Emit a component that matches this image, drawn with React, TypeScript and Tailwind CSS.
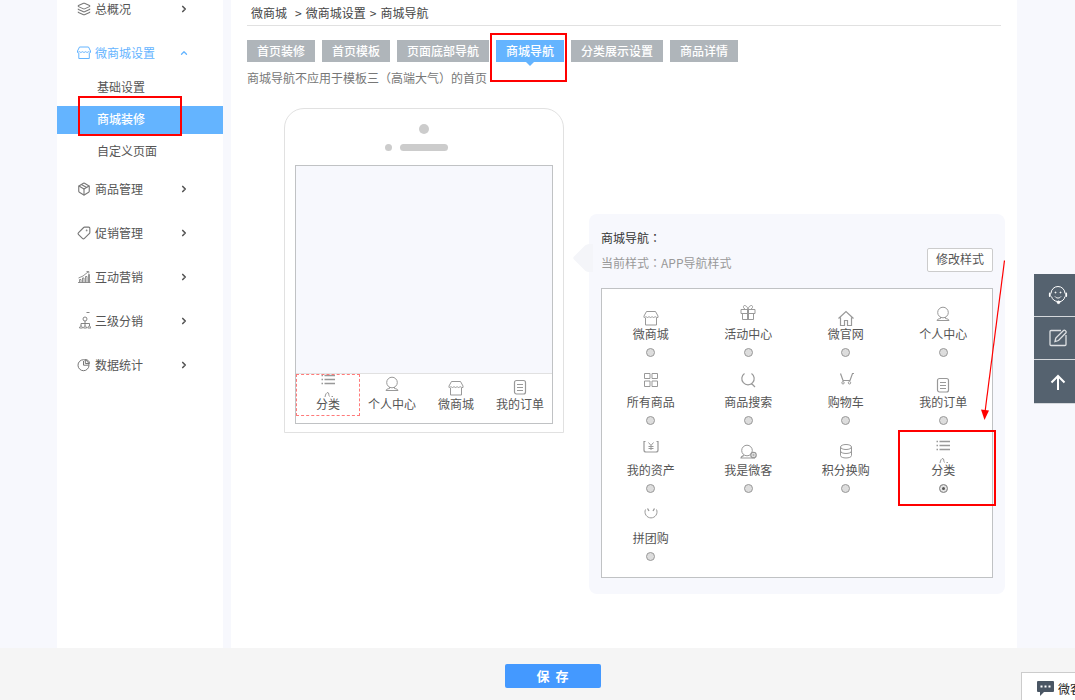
import { useState } from "react";
import type { ReactNode } from "react";
import { ChevronRight, ChevronUp, Layers, Package, Tag } from "lucide-react";

const navIcons: Record<string, ReactNode> = {
  store: (
    <>
      <path d="M7.5 7.5h9l2.5 4.5v1.5h-1.2c-.8 0-1-.8-1.6-.8s-.8.8-1.6.8-.9-.8-1.5-.8-.8.8-1.5.8-1-.8-1.6-.8-.8.8-1.5.8-.9-.8-1.5-.8-.8.8-1.4.8H5V12z" />
      <path d="M6.5 14v7h11v-7" />
    </>
  ),
  gift: (
    <>
      <path d="M5 5.5h14v4H5zM6.500 9.500v6h11v-6M11.500 5.500v10M12.500 5.500v10" />
      <path d="M12 5c-.5-2-2-3.500-3.500-3.500S7 4.500 9 5M12 5c.5-2 2-3.500 3.500-3.500S17 4.500 15 5" />
    </>
  ),
  home: <path d="M4.500 14.500 12 7.500l7.500 7M6.500 13.500v8h4v-5h3v5h4v-8" strokeWidth="1.200" />,
  person: (
    <>
      <circle cx="12" cy="8.500" r="5.300" />
      <path d="M9.500 13v1.500c-2 .3-3.500 1-3.500 2h12c0-1-1.500-1.700-3.500-2V13" />
    </>
  ),
  grid: <path d="M5.500 1.500h5.500v5H5.500zM13 1.500h5.500v5H13zM5.500 9h5.500v5.500H5.500zM13 9h5.500v5.500H13z" />,
  search: <path d="M8.500 1.500A6.200 6.200 0 1 0 15.500 1.500M15.500 11.500l3.500 3.500" strokeWidth="1.200" />,
  cart: (
    <>
      <path d="M6.500 1.500 9 8.500h7l2.500-7H20" strokeWidth="1.200" />
      <circle cx="9" cy="10.800" r="1.200" />
      <circle cx="15.500" cy="10.800" r="1.200" />
    </>
  ),
  order: (
    <>
      <rect x="6.500" y="6.500" width="11" height="13.500" rx="2" strokeWidth="1.200" />
      <path d="M9 10.500h6M9 13.500h6M9 16.500h6" />
    </>
  ),
  asset: (
    <>
      <path d="M6.500 1.500h-1.500v8.500a2 2 0 0 0 2 2h10a2 2 0 0 0 2-2V1.500h-1.500" strokeWidth="1.200" />
      <path d="m9.500 2.500 2.500 3 2.500-3M12 5.500V10M9.500 6.500h5M9.500 8.500h5" />
    </>
  ),
  agent: (
    <>
      <circle cx="11" cy="10.500" r="5.300" />
      <path d="M8 15.500c-1.500.5-3 1-3 2.500h14" strokeWidth="1.200" />
      <circle cx="17.500" cy="15" r="2.700" strokeWidth="1.300" />
      <circle cx="17.500" cy="15" r=".8" />
    </>
  ),
  coins: (
    <>
      <ellipse cx="12" cy="7" rx="5.500" ry="2.500" />
      <path d="M6.500 7v8.500c0 3.300 11 3.300 11 0V7M6.500 11c0 3.300 11 3.300 11 0" />
    </>
  ),
  list: (
    <>
      <path d="M8.500 1.500H19M8.500 5.500H19M8.500 9.500H19" strokeWidth="1.400" />
      <path d="M5.500 1.500H7M5.500 5.500H7M5.500 9.500H7" strokeWidth="1.600" />
      <path d="M9 23c.5-3 1.500-4.500 3-4.500 1 0 .5 3 1.500 4M15.500 22.500h1.500" />
    </>
  ),
  group: (
    <>
      <path d="M6.500 1.500a6 6 0 1 0 11 0" />
      <path d="m8.500.5 1.500 2.500M15.500.5 14 3" strokeWidth="1.300" />
    </>
  ),
};

const navOptions = [
  { icon: "store", name: "微商城" },
  { icon: "gift", name: "活动中心" },
  { icon: "home", name: "微官网" },
  { icon: "person", name: "个人中心" },
  { icon: "grid", name: "所有商品" },
  { icon: "search", name: "商品搜索" },
  { icon: "cart", name: "购物车" },
  { icon: "order", name: "我的订单" },
  { icon: "asset", name: "我的资产" },
  { icon: "agent", name: "我是微客" },
  { icon: "coins", name: "积分换购" },
  { icon: "list", name: "分类" },
  { icon: "group", name: "拼团购" },
];

const phoneNav = [
  { icon: "list", name: "分类" },
  { icon: "person", name: "个人中心" },
  { icon: "store", name: "微商城" },
  { icon: "order", name: "我的订单" },
];

const tabs = ["首页装修", "首页模板", "页面底部导航", "商城导航", "分类展示设置", "商品详情"];

// full-width punctuation centred in its em box
function Mark({ children }: { children: string }) {
  return <span className="font-['Noto_Sans_CJK_TC',sans-serif]">{children}</span>;
}

function NavIcon({ name }: { name: string }) {
  return (
    <svg
      viewBox="0 0 24 24"
      className="-mb-[3px] h-6 w-6 shrink-0 text-[#999]"
      fill="none"
      stroke="currentColor"
      aria-hidden="true"
    >
      {navIcons[name]}
    </svg>
  );
}

function SideIcon({ children }: { children: ReactNode }) {
  return (
    <svg viewBox="0 0 14 14" className="size-3.5" fill="none" stroke="currentColor" strokeWidth="1" aria-hidden="true">
      {children}
    </svg>
  );
}

function MenuRow({ icon, name, open }: { icon: ReactNode; name: string; open?: boolean }) {
  return (
    <button
      type="button"
      className={`flex h-11 w-full items-center gap-1 pr-[34px] pb-0.5 pl-5 ${open ? "text-[#64b4ff]" : "text-[#555]"}`}
    >
      <span className={open ? "" : "text-[#777]"}>{icon}</span>
      <span>{name}</span>
      {open ? (
        <ChevronUp className="ml-auto size-2.5" strokeWidth={3} />
      ) : (
        <ChevronRight className="ml-auto size-2.5" strokeWidth={4} />
      )}
    </button>
  );
}

function Sidebar() {
  return (
    <nav className="w-[166px] shrink-0 overflow-hidden bg-white">
      <div className="-mt-3">
        <MenuRow icon={<Layers className="size-3.5" strokeWidth={1.800} />} name="总概况" />
        <MenuRow
          open
          name="微商城设置"
          icon={
            <SideIcon>
              <path d="M2.500 1h9l2 4v1.500c-1 0-1.200-.8-1.800-.8s-.9.8-1.600.8-.9-.8-1.500-.8-.9.8-1.600.8-.9-.8-1.500-.8-.9.8-1.600.8-.9-.8-1.500-.8-.8.8-1.900.8V5zM1.800 7v5.500h10.500V7" />
            </SideIcon>
          }
        />
        <ul className="-mt-1">
          <li>
            <a href="#basic" className="flex h-8 items-center pb-0.5 pl-10">
              基础设置
            </a>
          </li>
          <li className="relative py-0.5">
            <a href="#decorate" className="flex h-7 items-center bg-[#64b4ff] pb-0.5 pl-10 font-medium text-white">
              商城装修
            </a>
            <span className="pointer-events-none absolute -top-2 left-[21px] h-10 w-[104px] border-2 border-[#f00]" />
          </li>
          <li>
            <a href="#pages" className="flex h-8 items-center pb-0.5 pl-10">
              自定义页面
            </a>
          </li>
        </ul>
        <MenuRow icon={<Package className="size-3.5" strokeWidth={1.900} />} name="商品管理" />
        <MenuRow icon={<Tag className="size-3.5 -scale-x-100" strokeWidth={1.900} />} name="促销管理" />
        <MenuRow
          name="互动营销"
          icon={
            <SideIcon>
              <path d="M1 12.500h12.500M2.500 12.500v-3H4v3M5.500 12.500V8H7v4.500M8.500 12.500v-6H10v6M11.500 12.500V4.500h1v8M1.500 8 6 6l5-4M9.500 1.500h2.300v2" strokeWidth=".8" />
            </SideIcon>
          }
        />
        <MenuRow
          name="三级分销"
          icon={
            <svg viewBox="0 0 14 18" className="h-[18px] w-3.5" fill="none" stroke="currentColor" strokeWidth=".9" aria-hidden="true">
              <path d="M9.500.5h3" />
              <circle cx="8" cy="7" r="2" />
              <path d="M8 9v5M4 14v-2.500h8.500V14M2.500 16c0-2.500 3-2.500 3 0zM6.600 16c0-2.500 3-2.500 3 0zM10.800 16c0-2.500 3-2.500 3 0z" />
            </svg>
          }
        />
        <MenuRow
          name="数据统计"
          icon={
            <SideIcon>
              <circle cx="6.500" cy="7.200" r="5.500" />
              <path d="M6.500 7.200V3M6.500 7.200h5.300M8.300 1.500v4h4.200c0-2.400-1.700-3.800-4.200-4z" />
            </SideIcon>
          }
        />
      </div>
    </nav>
  );
}

function Phone() {
  return (
    <div className="w-[280px] shrink-0 rounded-t-[20px] border border-[#e1e1e1] px-2.5 pt-[15px] pb-2">
      <div className="flex flex-col items-center gap-2.5">
        <span className="size-2.5 rounded-full bg-[#ccc]" />
        <span className="flex items-center gap-2 pr-4">
          <span className="size-[7px] rounded-full bg-[#ccc]" />
          <span className="h-[7px] w-12 rounded-full bg-[#ccc]" />
        </span>
      </div>
      <div className="mt-3.5 border border-[#c0c2c4]">
        <div className="h-[207px] bg-[#f7f8fd]" />
        <ul className="grid grid-cols-4 border-t border-[#e1e1e1] pb-[7px]">
          {phoneNav.map((item, i) => (
            <li
              key={item.name}
              className={`flex h-[42px] flex-col items-center ${i === 0 ? "outline outline-1 -outline-offset-1 outline-dashed outline-[#ff7a7a]" : ""}`}
            >
              <NavIcon name={item.icon} />
              <span className="leading-[18px]">{item.name}</span>
            </li>
          ))}
        </ul>
      </div>
    </div>
  );
}

function NavPanel() {
  const [selected, setSelected] = useState("分类");

  return (
    <section className="relative mt-[106px] flex-1 rounded-lg bg-[#f7f8fd] px-3 pt-[15px] pb-4">
      <svg viewBox="0 0 20 28" className="absolute top-[30px] -left-4 h-7 w-5" aria-hidden="true">
        <path d="M1 12.500 12 1.500q2-1.500 4-1.500h4v28h-4q-2 0-4-1.500L1 15.500q-1.500-1.500 0-3z" fill="#f4f5f9" />
      </svg>
      <div className="flex items-end justify-between">
        <div>
          <h2 className="leading-[18px] text-[#333]">
            商城导航<Mark>：</Mark>
          </h2>
          <p className="mt-[7px] leading-[18px] text-[#999]">
            当前样式<Mark>：</Mark>APP导航样式
          </p>
        </div>
        <button type="button" className="h-6 w-[66px] rounded-xs border border-[#ccc] bg-white pb-0.5 text-[#555]">
          修改样式
        </button>
      </div>
      <div className="mt-4 grid grid-cols-4 border border-[#c0c2c4] bg-white pt-[11px] pb-[5px]">
        {navOptions.map((item) => (
          <label key={item.name} className="relative flex h-[68px] flex-col items-center pt-1">
            <NavIcon name={item.icon} />
            <span className="leading-[18px]">{item.name}</span>
            <input
              type="radio"
              name="shop-nav"
              checked={selected === item.name}
              onChange={() => setSelected(item.name)}
              className="mt-[5px] size-[9px] appearance-none rounded-full border border-[#999] bg-[#ddd] checked:bg-[#555] checked:shadow-[inset_0_0_0_2px_#e4e4e4]"
            />
            {item.icon === "list" && (
              <span className="pointer-events-none absolute -top-1.5 -right-1 left-[3px] h-[76px] border-2 border-[#f00]" />
            )}
          </label>
        ))}
      </div>
      <svg
        viewBox="0 0 24 164"
        className="pointer-events-none absolute top-[45px] right-0 h-[164px] w-6"
        aria-hidden="true"
      >
        <path d="M23.500 1.500 4 153" stroke="#f00" strokeWidth="1.200" />
        <path d="m0 150.500 8 1-4.500 9.500z" fill="#f00" />
      </svg>
    </section>
  );
}

function QuickBar() {
  const cell = "flex h-[43px] w-full items-center justify-center border-b border-[#d5d8dc] pl-1.5";
  return (
    <div className="fixed top-[274px] right-0 w-[41px] bg-[#55626f] text-white">
      <button type="button" aria-label="客服" className={cell}>
        <svg viewBox="0 0 20 20" className="size-5" fill="none" stroke="currentColor" aria-hidden="true">
          <path d="M3 8.500a7 7 0 0 1 14 0M3.500 11.500a7 7 0 0 0 6 5M17 11.500c-.5 3-3 5-6 5.500" />
          <path d="M1.800 8.500v2.500M18.200 8.500v2.500" strokeWidth="1.800" strokeLinecap="round" />
          <path d="M7 11.500c1.500 2 4.500 2 6 0" />
          <circle cx="7.500" cy="7.500" r=".5" fill="currentColor" />
          <circle cx="12.500" cy="7.500" r=".5" fill="currentColor" />
          <circle cx="10.500" cy="17.300" r="1.300" fill="currentColor" />
        </svg>
      </button>
      <button type="button" aria-label="反馈" className={cell}>
        <svg viewBox="0 0 20 20" className="size-5 opacity-80" fill="none" stroke="currentColor" strokeWidth="1.300" aria-hidden="true">
          <path d="M13 2.500H3a1 1 0 0 0-1 1v13a1 1 0 0 0 1 1h14a1 1 0 0 0 1-1V7" />
          <path d="m7 13.500.8-3.500 7.700-7.500c1-1 3.500 1 2.500 2.300L10.500 12.500z" />
        </svg>
      </button>
      <button type="button" aria-label="返回顶部" className="flex h-11 w-full items-center justify-center border-b border-[#d5d8dc] pl-1.5">
        <svg viewBox="0 0 20 20" className="size-5" fill="none" stroke="currentColor" strokeWidth="2" aria-hidden="true">
          <path d="M10 18V4M3.500 10.500 10 4l6.500 6.500" />
        </svg>
      </button>
    </div>
  );
}

export default function App() {
  return (
    <div className="flex min-h-screen flex-col overflow-x-hidden bg-[#f7f8fd] font-['Noto_Sans_CJK_SC',sans-serif] text-xs text-[#555]">
      <div className="flex flex-1 gap-2 pr-[58px] pl-[57px]">
        <Sidebar />
        <main className="flex-1 bg-white">
          <div className="mx-4 flex h-[26px] items-center border-b border-[#e1e1e1] px-1 text-[#444]">
            <a href="#shop">微商城</a>
            <span className="ml-2 pr-1">&gt;</span>
            <a href="#settings">微商城设置</a>
            <span className="px-1">&gt;</span>
            <span>商城导航</span>
          </div>
          <div className="mx-4 mt-3.5 flex gap-[7px]">
            {tabs.map((tab) => {
              const active = tab === "商城导航";
              return (
                <div key={tab} className="relative">
                  <button
                    type="button"
                    className={`block h-[22px] px-2.5 font-medium whitespace-nowrap text-white ${active ? "bg-[#64b4ff]" : "bg-[#afb5ba]"}`}
                  >
                    {tab}
                  </button>
                  {active && (
                    <>
                      <span className="absolute top-full left-1/2 -translate-x-1/2 border-x-4 border-t-4 border-x-transparent border-t-[#64b4ff]" />
                      <span className="pointer-events-none absolute -top-[7px] -right-[3px] -left-1.5 h-[49px] border-2 border-[#f00]" />
                    </>
                  )}
                </div>
              );
            })}
          </div>
          <p className="mx-4 mt-[7px] leading-[18px] text-[#777]">
            商城导航不应用于模板三<Mark>（</Mark>高端大气<Mark>）</Mark>的首页
          </p>
          <div className="mt-[21px] flex items-start gap-[25px] pr-3 pl-[53px]">
            <Phone />
            <NavPanel />
          </div>
        </main>
      </div>
      <footer className="flex h-[52px] items-center justify-center bg-[#f5f5f5] pt-1 pl-[30px]">
        <button type="button" className="h-6 w-24 rounded-xs bg-[#4499ff] text-[13px] font-bold whitespace-pre text-white">
          {"保  存"}
        </button>
      </footer>
      <QuickBar />
      <button
        type="button"
        className="fixed right-0 bottom-0 flex h-7 w-[54px] items-center gap-1 overflow-hidden border-t border-l border-[#ccc] bg-white pt-1 pl-[15px] whitespace-nowrap text-[#222]"
      >
        <svg viewBox="0 0 17 15" className="h-[15px] w-[17px] shrink-0" aria-hidden="true">
          <path d="M1 0h15q1 0 1 1v9q0 1-1 1H7l-4 4v-4H1q-1 0-1-1V1q0-1 1-1z" fill="#4a5664" />
          <path d="M3.500 4.500h2v2h-2zM7.500 4.500h2v2h-2zM11.500 4.500h2v2h-2z" fill="#fff" />
        </svg>
        微客
      </button>
    </div>
  );
}
